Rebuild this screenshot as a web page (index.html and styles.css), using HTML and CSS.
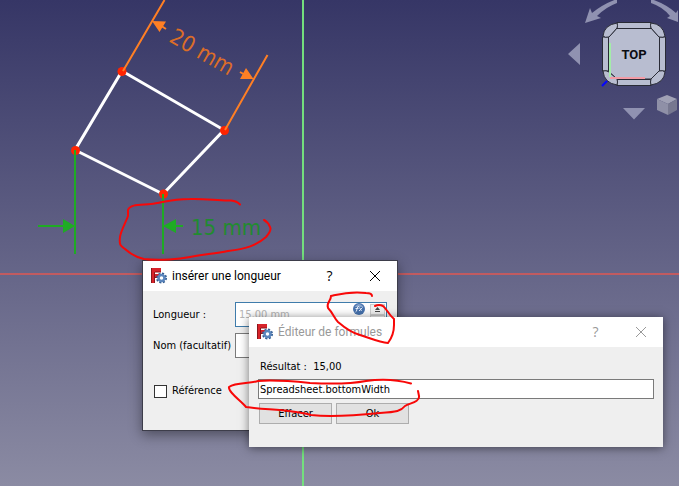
FILE: index.html
```html
<!DOCTYPE html>
<html lang="fr">
<head>
<meta charset="utf-8">
<title>Éditeur de formules</title>
<link rel="stylesheet" href="styles.css">
</head>
<body>
<main class="viewport">
  <svg class="layer" aria-label="Esquisse">
    <g shape-rendering="crispEdges">
      <rect x="0" y="273" width="100%" height="2" fill="#c15b60"/>
      <rect x="302" y="0" width="2" height="100%" fill="#73df7d"/>
    </g>
    <path d="M122 71L224 130L163 194L75 150Z" class="edge"/>
    <g fill="#ff2400"><circle cx="122" cy="71.500" r="4.500"/><circle cx="224.500" cy="130.500" r="4.500"/><circle cx="163.500" cy="194" r="4.500"/><circle cx="75.500" cy="150.500" r="4.500"/></g>
    <g class="dim-orange">
      <path d="M123 71L164.500 0M225 130L267.500 55" class="line"/>
      <path d="M152 21L166 21.500L159.500 32ZM253.500 79L240 79L246 68Z"/>
      <path d="M160 25L166 29M240 72L247 76" class="line"/>
      <text transform="translate(168 41) rotate(30)" class="measure">20 mm</text>
    </g>
    <g class="dim-green">
      <path d="M75 150V254M163 194V254M38 226H65M172 226H183" class="line"/>
      <path d="M75 226L63 219V233ZM163 226L176 219V233Z"/>
      <text x="191" y="235" class="measure">15 mm</text>
    </g>
  </svg>

  <svg class="navcube" viewBox="0 0 129 130" aria-label="Cube de navigation">
    <g fill="#9092b1">
      <path d="M67 -1Q53 4 42 13L40 8L35 23L51 18L47 16Q56 7 67 3Z"/>
      <path d="M101 -1Q116 4 126 13L128 10V22L117 18L120 16Q113 7 101 3Z"/>
      <path d="M18 54L30 43V65ZM73 108H95L84 119.500Z"/>
    </g>
    <path d="M52 86L60 78" stroke="#0505ff" stroke-width="2"/>
    <g fill="#b8bdd0" stroke="#292b36" stroke-width="1">
      <path d="M67 28H101L110 38V70L101 79H67L58 71V38Z"/>
      <path d="M67 22.500H101V28.500H67ZM67 79.500H101V85.500H67ZM52.500 37H58.500V71H52.500ZM109.500 37H115.500V71H109.500Z"/>
      <path d="M53 36Q54 25 67 23Q68 26 67 28L59 37Q55 38 53 36ZM101 23Q113 24 115 36Q114 38 109 37L101 28Q100 25 101 23ZM53 71Q56 70 59 72L67 79Q68 82 67 85Q54 83 53 71ZM101 79L109 71Q113 70 115 72Q114 83 101 85Q100 82 101 79Z"/>
    </g>
    <path d="M60 43V77" stroke="#a4eca9" stroke-width="2"/>
    <path d="M60 78H95" stroke="#f29ba5" stroke-width="2"/>
    <text x="84" y="59" class="cube-label" text-anchor="middle">TOP</text>
    <path d="M107 99L117 95L127 99L118 104Z" fill="#a0a1b5"/>
    <path d="M107 99L118 104V115L107 110Z" fill="#8f90a7"/>
    <path d="M118 104L127 99V110L118 115Z" fill="#777890"/>
  </svg>

  <section class="dialog length-dialog" aria-labelledby="length-title">
    <header class="titlebar">
      <svg class="logo" viewBox="0 0 16 16" aria-hidden="true"><use href="#freecad"/></svg>
      <h1 id="length-title">insérer une longueur</h1>
      <button class="chrome" type="button">?</button>
      <button class="chrome" type="button" aria-label="Fermer"><svg viewBox="0 0 10 10"><path d="M0 0L10 10M10 0L0 10"/></svg></button>
    </header>
    <form class="length-form">
      <label for="length">Longueur :</label>
      <div class="spinbox">
        <input id="length" type="text" value="15,00 mm" disabled>
        <button class="fx" type="button" aria-label="Formule"><svg viewBox="0 0 12 12"><circle cx="6" cy="6" r="6" fill="#4772ad"/><path d="M1.500 4Q6 -2 10.500 4Z" fill="#86a4cc"/><path d="M2.500 9Q3.500 9 4 6T6 3.500M2.500 5.500H5.500M6 8L9.500 4.500M6.500 4.500L8.500 8" fill="none" stroke="#e6eef8"/></svg></button>
        <div class="steps">
          <button type="button" aria-label="Augmenter"><svg viewBox="0 0 7 6"><path d="M1 4L3.500 1L6 4ZM1 5H6V6H1Z"/></svg></button>
          <button type="button" aria-label="Diminuer"><svg viewBox="0 0 7 6"><path d="M1 0H6V1H1ZM1 2H6L3.500 5Z"/></svg></button>
        </div>
      </div>
      <label for="name">Nom (facultatif)</label>
      <input id="name" class="field" type="text">
      <label class="check"><input type="checkbox">Référence</label>
    </form>
  </section>

  <section class="dialog formula-dialog" aria-labelledby="formula-title">
    <header class="titlebar inactive">
      <svg class="logo" viewBox="0 0 16 16" aria-hidden="true">
        <g id="freecad">
          <path d="M0 0H10V4H4V6H8V9H4V15H0Z" fill="#d8232a"/>
          <path d="M0 0H1V15H0ZM3 4H4V15H3Z" fill="#8a161b"/>
          <path d="M4 4H10M4 9.500H7" stroke="#8a161b"/>
          <circle cx="10.500" cy="10" r="4.500" fill="none" stroke="#345d91" stroke-width="2" stroke-dasharray="2 1.530"/>
          <circle cx="10.500" cy="10" r="3" fill="#fff" stroke="#5b86bd" stroke-width="2.500"/>
        </g>
      </svg>
      <h1 id="formula-title">Éditeur de formules</h1>
      <button class="chrome" type="button">?</button>
      <button class="chrome" type="button" aria-label="Fermer"><svg viewBox="0 0 10 10"><path d="M0 0L10 10M10 0L0 10"/></svg></button>
    </header>
    <form class="formula-form">
      <label class="result" for="formula">Résultat :&nbsp; 15,00</label>
      <input id="formula" class="field" type="text" value="Spreadsheet.bottomWidth">
      <div class="actions"><button type="button">Effacer</button><button type="button">Ok</button></div>
    </form>
  </section>

  <svg class="layer marks" aria-hidden="true">
    <path d="M240 204.500Q237 201 231 200.500C218 201 207 198.500 190 199C170 199 162 203 151 204C140 205 130 204 128 210V216C126 222 121 230 120 237C119 246 121 246 125 249Q134 257 144 259C160 261 180 259 190 257C205 254 215 254 228 251C245 249 256 246 266 237Q272 230 270 227Q268 222 264 220"/>
    <path d="M372 296Q372 293 366 293C350 291 340 294 331 296C331 301 326 303 328 308C333 313 334 318 338 322C345 328 352 333 360 335C370 338 379 342 388 343Q394 335 394 325V319C388 314 387 309 383 306Q379 304 375 306"/>
    <path d="M411 383.500C395 379 380 379 366 381C350 384 330 384 310 383C290 381 270 380 258 381C250 384 236 382 229 387C228 392 241 401 246 407C265 410 290 409 311 415C330 417 360 415 380 413C397 412 401 411 405 406C410 403 420 402 419 396L418 391"/>
  </svg>
</main>
</body>
</html>
```
FILE: styles.css
```css
* { box-sizing: border-box; }

body {
  margin: 0;
  font: 11px/16px "DejaVu Sans Condensed", Roboto, sans-serif;
  color: #000;
}

.viewport {
  position: relative;
  min-height: 100vh;
  overflow: hidden;
  background: linear-gradient(#363666, #8b8ba3);
}

.layer {
  position: absolute;
  inset: 0;
  width: 100%;
  height: 100%;
}

.edge { fill: none; stroke: #fff; stroke-width: 3px; }
.line { fill: none; stroke-width: 2px; }
.dim-orange { fill: #ff7f24; }
.dim-orange .line { stroke: #ff7f24; }
.dim-green { fill: #1fab24; }
.dim-green .line { stroke: #1fab24; }
.measure { font: 22px "DejaVu Sans Condensed", Roboto, sans-serif; }
.dim-orange .measure { fill: #dc6d28; }
.dim-green .measure { fill: #228b30; }

.navcube {
  position: absolute;
  top: 0;
  right: 0;
  width: 129px;
  height: 130px;
}
.cube-label { font: bold 13px Roboto, sans-serif; fill: #0b0c12; }

.dialog {
  position: absolute;
  display: flex;
  flex-direction: column;
  background: #efefef;
}
.length-dialog {
  left: 142px;
  top: 260px;
  width: 256px;
  border: 1px solid #3d3d4a;
  box-shadow: 0 4px 12px rgba(0, 0, 0, .4);
}
.formula-dialog {
  left: 249px;
  top: 317px;
  width: 414px;
  box-shadow: 0 1px 9px rgba(0, 0, 0, .5);
}

.titlebar {
  display: flex;
  align-items: center;
  height: 30px;
  padding-left: 8px;
  background: #fff;
}
.titlebar h1 {
  flex: 1;
  margin: 0 0 0 5px;
  font: 12px/16px Roboto, sans-serif;
  white-space: nowrap;
}
.logo { width: 16px; height: 16px; }

.chrome {
  display: grid;
  place-items: center;
  width: 45px;
  height: 30px;
  padding: 0;
  border: 0;
  background: none;
  color: inherit;
  font: 14px/26px "Open Sans", sans-serif;
}
.chrome svg { width: 10px; height: 10px; overflow: visible; fill: none; stroke: currentColor; }
.inactive { color: #999; }

input, .actions button { font: inherit; color: inherit; }

.length-form {
  display: grid;
  grid-template-columns: 76px minmax(0, 1fr);
  column-gap: 6px;
  row-gap: 6px;
  align-items: center;
  padding: 11px 10px 31px;
  white-space: nowrap;
}

.spinbox {
  display: flex;
  height: 25px;
  border: 1px solid #3f7cab;
  background: #fff;
}
.spinbox input {
  flex: 1;
  min-width: 0;
  padding: 0 3px;
  border: 0;
  background: none;
  color: #b5b5b5;
}
.fx { width: 14px; padding: 0; border: 0; background: none; margin-right: 2px; }
.fx svg { display: block; width: 12px; height: 12px; margin-bottom: 11px; }
.steps { display: flex; flex-direction: column; width: 17px; padding: 1px; }
.steps button {
  display: grid;
  place-items: center;
  flex: 1;
  padding: 0;
  border: 1px solid #ccc;
  background: #f0f0f0;
}
.steps svg { width: 7px; height: 6px; fill: #444; }

.field {
  width: 100%;
  min-width: 0;
  height: 25px;
  padding: 0 3px;
  border: 1px solid #7a7a7a;
  background: #fff;
}

.check {
  grid-column: 1 / -1;
  display: flex;
  align-items: center;
  gap: 4px;
  margin-top: 19px;
}
.check input {
  appearance: none;
  width: 13px;
  height: 13px;
  margin: 0 1px;
  border: 1px solid #333;
  background: #fff;
}

.formula-form { padding: 12px 9px 23px; }
.result { display: block; margin: 0 2px 4px; }
.formula-form .field { display: block; height: 20px; padding: 0 1px; }
.actions { display: flex; gap: 4px; margin-top: 4px; padding-left: 1px; }
.actions button {
  width: 73px;
  height: 21px;
  padding: 0;
  border: 1px solid #adadad;
  background: #e1e1e1;
}

.marks {
  pointer-events: none;
  fill: none;
  stroke: #f80808;
  stroke-width: 2px;
  stroke-linecap: round;
}
```
